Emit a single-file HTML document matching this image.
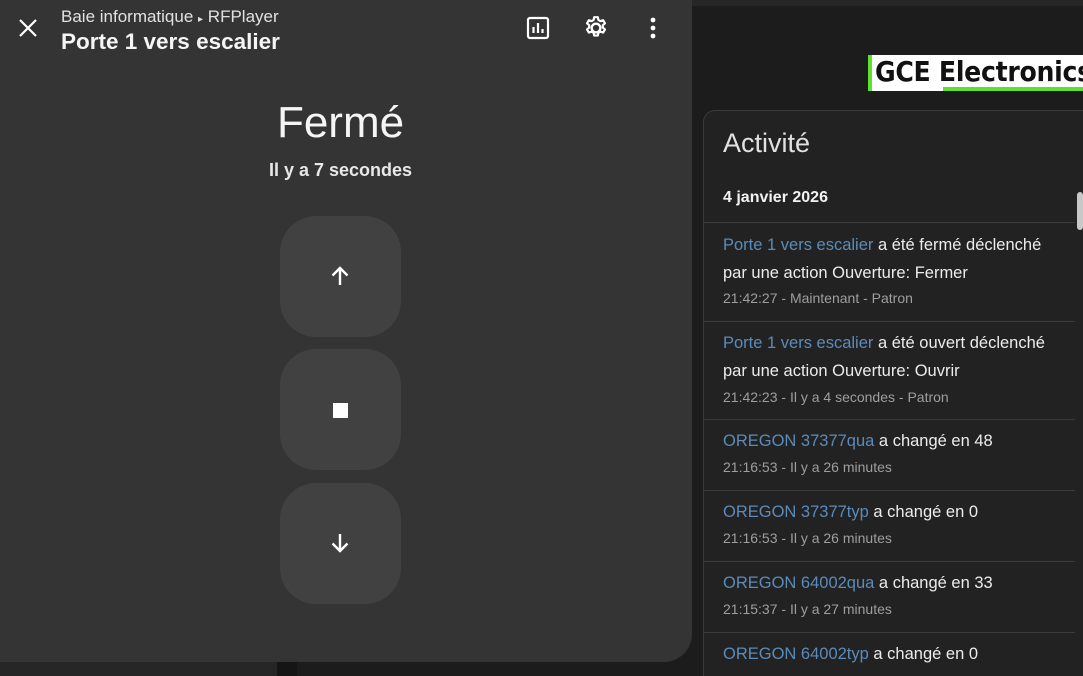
<!DOCTYPE html><html><head><style>
*{margin:0;padding:0;box-sizing:border-box}
html,body{width:1083px;height:676px;overflow:hidden}
body{background:#1c1c1c;font-family:"Liberation Sans",sans-serif;position:relative;color:#e1e1e1}
.a{position:absolute}
.dlg{left:0;top:-30px;width:692px;height:692px;background:#343434;border-radius:0 28px 28px 0}
.btn{position:absolute;left:280px;width:121px;height:121px;border-radius:36px;background:#414141}
.card{left:703px;top:110px;width:400px;height:566px;background:#222;border:1px solid #3a3a3a;border-bottom:none;border-radius:12px 12px 0 0;overflow:hidden}
.it{position:absolute;left:19px;font-size:16.5px;white-space:nowrap;color:#ececec}
.l{color:#5b8bb9}
.s{position:absolute;left:19px;font-size:14px;color:#9e9e9e;white-space:nowrap}
.sep{position:absolute;left:0;width:371px;height:1px;background:#3a3a3a}
</style></head><body>
<div class="a" style="left:0;top:662px;width:277px;height:14px;background:#262626"></div>
<div class="a" style="left:277px;top:662px;width:20px;height:14px;background:#151515"></div>
<div class="a" style="left:692px;top:0;width:391px;height:6px;background:#262626"></div>
<div class="a dlg"></div>
<svg class="a" style="left:17px;top:17px" width="22" height="22" viewBox="0 0 22 22"><path d="M3 3L19 19M19 3L3 19" stroke="#fff" stroke-width="2.2"/></svg>
<div class="a" style="left:61px;top:7px;font-size:17px;color:#e1e1e1;white-space:nowrap">Baie informatique <span style="font-size:10px">▸</span> RFPlayer</div>
<div class="a" style="left:61px;top:29px;font-size:22.5px;font-weight:bold;color:#f5f5f5;white-space:nowrap">Porte 1 vers escalier</div>
<svg class="a" style="left:526px;top:16px" width="24" height="24" viewBox="0 0 24 24"><rect x="2" y="2" width="20" height="20" rx="2" fill="none" stroke="#fff" stroke-width="2.2"/><path d="M7.5 11v6M12 7v10M16.5 13v4" stroke="#fff" stroke-width="2.2"/></svg>
<svg class="a" style="left:583px;top:15px" width="26" height="26" viewBox="0 0 24 24"><path d="M12 8a4 4 0 1 0 0 8a4 4 0 1 0 0-8z" fill="none" stroke="#fff" stroke-width="2.2"/><path d="M10.3 2h3.4l.5 2.6 1.9 1.1 2.5-.9 1.7 2.9-2 1.7v2.2l2 1.7-1.7 2.9-2.5-.9-1.9 1.1-.5 2.6h-3.4l-.5-2.6-1.9-1.1-2.5.9-1.7-2.9 2-1.7v-2.2l-2-1.7 1.7-2.9 2.5.9 1.9-1.1z" fill="none" stroke="#fff" stroke-width="2" stroke-linejoin="round"/></svg>
<svg class="a" style="left:648px;top:16px" width="10" height="24" viewBox="0 0 10 24"><circle cx="5" cy="4" r="2.4" fill="#fff"/><circle cx="5" cy="12" r="2.4" fill="#fff"/><circle cx="5" cy="20" r="2.4" fill="#fff"/></svg>
<div class="a" style="left:0;width:681px;top:98px;text-align:center;font-size:44px;color:#f5f5f5">Fermé</div>
<div class="a" style="left:0;width:681px;top:160px;text-align:center;font-size:18px;font-weight:bold;color:#e8e8e8">Il y a 7 secondes</div>
<div class="btn" style="top:216px"></div>
<div class="btn" style="top:349px"></div>
<div class="btn" style="top:483px"></div>
<svg class="a" style="left:329px;top:265px" width="22" height="22" viewBox="0 0 22 22"><path d="M11 20V3M3.5 10.5L11 3l7.5 7.5" fill="none" stroke="#fff" stroke-width="2.4"/></svg>
<div class="a" style="left:333px;top:403px;width:15px;height:15px;background:#fff"></div>
<svg class="a" style="left:329px;top:532px" width="22" height="22" viewBox="0 0 22 22"><path d="M11 2v17M3.5 11.5L11 19l7.5-7.5" fill="none" stroke="#fff" stroke-width="2.4"/></svg>
<div class="a" style="left:868px;top:55px;width:215px;height:36px;background:#fff;overflow:hidden">
<div class="a" style="left:0;top:0;width:4px;height:36px;background:#5de02e"></div>
<div class="a" style="left:75px;top:32px;width:140px;height:4px;background:#5de02e"></div>
<div class="a" style="left:7px;top:0px;font-size:28px;font-weight:bold;color:#111;white-space:nowrap;font-family:'DejaVu Sans Condensed','Liberation Sans',sans-serif;letter-spacing:-0.3px">GCE Electronics</div>
</div>
<div class="a card">
<div class="it" style="top:17px;font-size:27px;color:#e1e1e1">Activité</div>
<div class="it" style="top:78px;font-weight:bold;font-size:16px;color:#f2f2f2">4 janvier 2026</div>
<div class="sep" style="top:111px"></div>
<div class="it" style="top:125px"><span class="l">Porte 1 vers escalier</span> a été fermé déclenché</div>
<div class="it" style="top:153px">par une action Ouverture: Fermer</div>
<div class="s" style="top:179px">21:42:27 - Maintenant - Patron</div>
<div class="sep" style="top:210px"></div>
<div class="it" style="top:223px"><span class="l">Porte 1 vers escalier</span> a été ouvert déclenché</div>
<div class="it" style="top:251px">par une action Ouverture: Ouvrir</div>
<div class="s" style="top:278px">21:42:23 - Il y a 4 secondes - Patron</div>
<div class="sep" style="top:308px"></div>
<div class="it" style="top:321px"><span class="l">OREGON 37377qua</span> a changé en 48</div>
<div class="s" style="top:348px">21:16:53 - Il y a 26 minutes</div>
<div class="sep" style="top:379px"></div>
<div class="it" style="top:392px"><span class="l">OREGON 37377typ</span> a changé en 0</div>
<div class="s" style="top:419px">21:16:53 - Il y a 26 minutes</div>
<div class="sep" style="top:450px"></div>
<div class="it" style="top:463px"><span class="l">OREGON 64002qua</span> a changé en 33</div>
<div class="s" style="top:490px">21:15:37 - Il y a 27 minutes</div>
<div class="sep" style="top:521px"></div>
<div class="it" style="top:534px"><span class="l">OREGON 64002typ</span> a changé en 0</div>
</div>
<div class="a" style="left:1077px;top:192px;width:6px;height:38px;background:#c8c8c8;border-radius:3px"></div>
</body></html>
